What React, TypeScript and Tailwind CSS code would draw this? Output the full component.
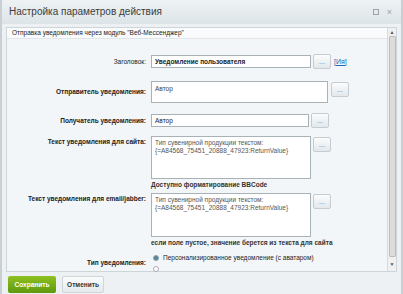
import React from "react";

const font = { fontFamily: '"Liberation Sans", Arial, sans-serif' };

function Dots() {
  return (
    <div className="w-[18px] h-[15px] shrink-0 rounded-[2px] border border-[#c5cdd2] bg-gradient-to-b from-[#fbfcfc] to-[#e2e8eb] flex items-center justify-center text-[7px] text-[#6a7479] leading-none">
      ...
    </div>
  );
}

function Label({ children, bold }: { children: React.ReactNode; bold?: boolean }) {
  return (
    <div className={`text-right pr-[5px] text-[6.5px] leading-[9px] text-[#222] ${bold ? "font-bold" : ""}`}>
      {children}
    </div>
  );
}

export default function App() {
  return (
    <div style={font} className="w-[403px] h-[294px] bg-[#eef1f3] border-x-2 border-[#c9cfd2] flex flex-col overflow-hidden">
      <div className="h-[24px] shrink-0 bg-gradient-to-b from-[#eef2f4] to-[#dde4e8] flex items-center pl-[7px] pr-[9px]">
        <div className="text-[10px] text-[#3c3c3c] flex-1 leading-none">Настройка параметров действия</div>
        <div className="flex items-center gap-[8px] text-[#9aa3a8]">
          <div className="w-[6px] h-[6px] border border-[#9aa3a8]" />
          <div className="text-[9px] leading-none">×</div>
        </div>
      </div>
      <div className="flex-1 px-[4px] pt-[3px] flex flex-col">
        <div className="h-[245px] border border-[#cdd5d9] bg-[#f3f6f8] flex">
          <div className="flex-1 flex flex-col">
            <div className="h-[14px] bg-[#f9fbfc] border-b border-[#dfe5e8] flex items-center pl-[5px] text-[6.5px] text-[#222]">
              Отправка уведомления через модуль "Веб-Мессенджер"
            </div>
            <div className="grid grid-cols-[144px_1fr] gap-y-0 pt-[15px] text-[7px]">
              <div className="flex items-center justify-end h-[16px]"><Label>Заголовок:</Label></div>
              <div className="flex items-center gap-[2px] h-[16px]">
                <div className="w-[160px] h-[13px] border border-[#a9b2b7] bg-white text-[6.5px] leading-[11px] pl-[3px] text-[#222] font-bold">Уведомление пользователя</div>
                <Dots />
                <span className="text-[#2067b0] underline text-[7px] ml-[1px]">[Ия]</span>
              </div>

              <div className="flex items-center justify-end h-[22px] mt-[11px]"><Label bold>Отправитель уведомления:</Label></div>
              <div className="flex items-start gap-[3px] mt-[11px]">
                <div className="w-[177px] h-[22px] border border-[#a9b2b7] bg-white text-[6.5px] pl-[3px] pt-[2px] text-[#444]">Автор</div>
                <div className="mt-[1px]"><Dots /></div>
              </div>

              <div className="flex items-center justify-end h-[16px] mt-[10px]"><Label bold>Получатель уведомления:</Label></div>
              <div className="flex items-center gap-[2px] h-[16px] mt-[10px]">
                <div className="w-[158px] h-[13px] border border-[#a9b2b7] bg-white text-[6.5px] leading-[11px] pl-[3px] text-[#222]">Автор</div>
                <Dots />
              </div>

              <div className="flex justify-end pt-[1px] mt-[7px]"><Label bold>Текст уведомления для сайта:</Label></div>
              <div className="flex flex-col mt-[7px]">
                <div className="flex items-start gap-[2px]">
                  <div className="w-[160px] h-[43px] border border-[#a9b2b7] bg-white text-[6.5px] leading-[8px] pl-[3px] pt-[2px] text-[#555]">
                    Тип сувенирной продукции текстом:<br />{"{=A84568_75451_20888_47923:ReturnValue}"}
                  </div>
                  <div className="mt-[1px]"><Dots /></div>
                </div>
                <div className="text-[6.5px] font-bold text-[#333] mt-[0px] h-[12px] leading-[12px]">Доступно форматирование BBCode</div>
              </div>

              <div className="flex justify-end pt-[1px] mt-[2px]"><Label bold>Текст уведомления для email/jabber:</Label></div>
              <div className="flex flex-col mt-[2px]">
                <div className="flex items-start gap-[2px]">
                  <div className="w-[160px] h-[44px] border border-[#a9b2b7] bg-white text-[6.5px] leading-[8px] pl-[3px] pt-[2px] text-[#555]">
                    Тип сувенирной продукции текстом:<br />{"{=A84568_75451_20888_47923:ReturnValue}"}
                  </div>
                  <div className="mt-[1px]"><Dots /></div>
                </div>
                <div className="text-[6.5px] font-bold text-[#333] mt-[1px] h-[12px]">если поле пустое, значение берется из текста для сайта</div>
              </div>

              <div className="flex justify-end pt-[5px] mt-[3px]"><Label bold>Тип уведомления:</Label></div>
              <div className="flex flex-col mt-[3px] pl-[2px]">
                <div className="flex items-center gap-[4px]">
                  <div className="w-[6px] h-[6px] rounded-full border border-[#8aa] bg-[#5b7fa0]" />
                  <span className="text-[6.5px] text-[#222]">Персонализированное уведомление (с аватаром)</span>
                </div>
                <div className="flex items-center gap-[4px] mt-[3px]">
                  <div className="w-[6px] h-[6px] rounded-full border border-[#aab] bg-white" />
                </div>
              </div>
            </div>
          </div>
          <div className="w-[9px] shrink-0 border-l border-[#d5dbde] bg-[#f0f0f0] flex flex-col items-center">
            <div className="h-[8px] text-[5px] text-[#555] leading-[8px]">▲</div>
            <div className="w-[7px] flex-1 bg-[#dcdcdc] border border-[#bdbdbd] rounded-[1px]" />
            <div className="h-[14px] text-[5px] text-[#555] leading-[14px]">▼</div>
          </div>
        </div>
        <div className="flex gap-[6px] pt-[4px] pl-[2px]">
          <div className="w-[48px] h-[17px] rounded-[2px] bg-gradient-to-b from-[#8fc021] to-[#5f9a0c] text-white font-bold text-[6.5px] flex items-center justify-center">Сохранить</div>
          <div className="w-[42px] h-[17px] rounded-[2px] border border-[#cfd5d8] bg-gradient-to-b from-[#fbfcfc] to-[#e4e9ec] text-[#333] font-bold text-[6.5px] flex items-center justify-center">Отменить</div>
        </div>
      </div>
    </div>
  );
}
